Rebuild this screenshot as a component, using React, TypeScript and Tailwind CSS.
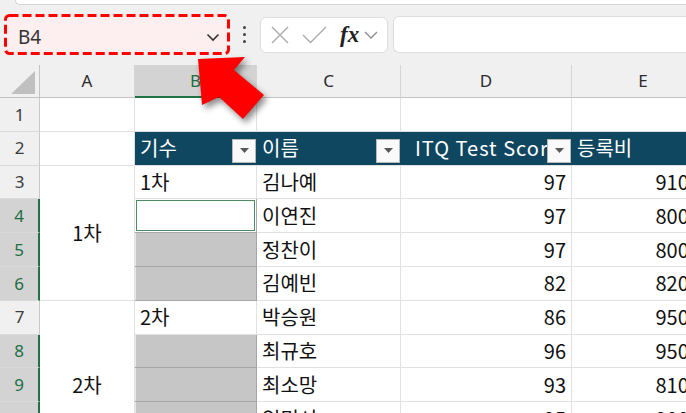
import React from "react";

const CELL_FONT = { fontFamily: '"Noto Sans CJK KR", "Noto Sans", sans-serif' };
const UI_FONT = { fontFamily: '"Noto Sans", "Open Sans", sans-serif' };

type Row = {
  n: number;
  a?: { text: string; span: string } | "none";
  b: "text" | "active" | "sel";
  bText?: string;
  c: string;
  d: string;
  e: string;
};

const ROWS: Row[] = [
  { n: 3, a: { text: "1차", span: "row-span-4" }, b: "text", bText: "1차", c: "김나예", d: "97", e: "91000" },
  { n: 4, a: "none", b: "active", c: "이연진", d: "97", e: "80000" },
  { n: 5, a: "none", b: "sel", c: "정찬이", d: "97", e: "80000" },
  { n: 6, a: "none", b: "sel", c: "김예빈", d: "82", e: "82000" },
  { n: 7, a: { text: "2차", span: "row-span-5" }, b: "text", bText: "2차", c: "박승원", d: "86", e: "95000" },
  { n: 8, a: "none", b: "sel", c: "최규호", d: "96", e: "95000" },
  { n: 9, a: "none", b: "sel", c: "최소망", d: "93", e: "81000" },
  { n: 10, a: "none", b: "sel", c: "임민서", d: "95", e: "90000" },
  { n: 11, a: "none", b: "sel", c: "", d: "", e: "" },
];

const SELECTED_ROWS = [4, 5, 6, 8, 9, 10, 11];

function RowHead({ n }: { n: number }) {
  const sel = SELECTED_ROWS.includes(n);
  return (
    <div
      style={UI_FONT}
      className={`flex items-center justify-center text-[17px] border-b border-[#d9d9d9] ${
        sel
          ? "bg-[#d3d3d3] text-[#1e6e42] border-r-2 border-r-[#217346]"
          : "bg-[#f0f0f0] text-[#3b3b3b] border-r border-r-[#c8c8c8]"
      }`}
    >
      {n}
    </div>
  );
}

function FilterBtn() {
  return (
    <div className="absolute right-px bottom-[2px] w-[24px] h-[24px] bg-[#fafafa] border border-[#b8b8b8] flex items-center justify-center">
      <svg width="9" height="5" viewBox="0 0 9 5">
        <polygon points="0,0 9,0 4.5,5" fill="#5a5a5a" />
      </svg>
    </div>
  );
}

function ColHead({ label, sel }: { label: string; sel?: boolean }) {
  return (
    <div
      style={UI_FONT}
      className={`flex items-center justify-center text-[17px] border-r border-[#d5d5d5] ${
        sel
          ? "bg-[#d3d3d3] text-[#1e6e42] border-b-2 border-b-[#217346]"
          : "bg-[#f0f0f0] text-[#2b2b2b] border-b border-b-[#c4c4c4]"
      }`}
    >
      {label}
    </div>
  );
}

const gridCell = "border-r border-b border-[#e1e1e1] bg-white";

export default function App() {
  return (
    <div className="relative w-[686px] h-[413px] overflow-hidden bg-[#f0f0f0]" style={UI_FONT}>
      {/* top strip */}
      <div className="h-[5px] ml-[15px] bg-white border-b border-l border-[#d4d4d4] rounded-bl-[7px]" />

      {/* name box + formula bar */}
      <div className="flex items-center mt-[9px] h-[41px]">
        <div className="relative ml-[4px] w-[226px] h-[41px] rounded-[5px] bg-[#fdeff0] flex items-center pl-[14px] pr-[10px] pt-[6px]">
          <span className="text-[19px] text-[#333]">B4</span>
          <svg className="ml-auto" width="14" height="9" viewBox="0 0 14 9">
            <polyline points="1.5,1.5 7,7 12.5,1.5" fill="none" stroke="#333" strokeWidth="1.6" />
          </svg>
          {/* red dashed callout outline */}
          <svg className="absolute inset-0 pointer-events-none" width="226" height="41">
            <rect
              x="1.5"
              y="1.5"
              width="223"
              height="38"
              rx="4"
              fill="none"
              stroke="#ff0000"
              strokeWidth="3"
              strokeDasharray="9 4"
            />
          </svg>
        </div>
        <div className="ml-[13px] flex flex-col gap-[4px]">
          <div className="w-[3px] h-[3px] rounded-full bg-[#444]" />
          <div className="w-[3px] h-[3px] rounded-full bg-[#444]" />
          <div className="w-[3px] h-[3px] rounded-full bg-[#444]" />
        </div>
        <div className="ml-[14px] w-[128px] h-[36px] bg-white rounded-[6px] border border-[#dedede] flex items-center">
          <svg className="ml-[9px]" width="20" height="20" viewBox="0 0 20 20">
            <line x1="2" y1="2" x2="18" y2="18" stroke="#ababab" strokeWidth="1.4" />
            <line x1="18" y1="2" x2="2" y2="18" stroke="#ababab" strokeWidth="1.4" />
          </svg>
          <svg className="ml-[12px]" width="25" height="18" viewBox="0 0 25 18">
            <polyline points="1,9 8.5,16.5 24,1" fill="none" stroke="#ababab" strokeWidth="1.4" />
          </svg>
          <span
            className="ml-[13px] text-[23px] font-bold italic text-[#222] leading-none"
            style={{ fontFamily: '"Liberation Serif", "DejaVu Serif", serif' }}
          >
            fx
          </span>
          <svg className="ml-[5px]" width="14" height="8" viewBox="0 0 14 8">
            <polyline points="1,1 7,7 13,1" fill="none" stroke="#8a8a8a" strokeWidth="1.3" />
          </svg>
        </div>
        <div className="ml-[5px] flex-1 h-[37px] bg-white rounded-l-[6px] border border-r-0 border-[#dedede]" />
      </div>

      {/* sheet grid */}
      <div className="mt-[10px] grid grid-cols-[40px_95px_122px_144px_171px_143px] grid-rows-[33px_repeat(11,33.8px)]">
        {/* column headers */}
        <div className="flex items-end justify-end pr-[4px] pb-[3px] bg-[#f0f0f0] border-r border-b border-[#c4c4c4]">
          <svg width="24" height="23" viewBox="0 0 24 23">
            <polygon points="24,0 24,23 0,23" fill="#c0c0c0" />
          </svg>
        </div>
        <ColHead label="A" />
        <ColHead label="B" sel />
        <ColHead label="C" />
        <ColHead label="D" />
        <ColHead label="E" />

        {/* row 1 */}
        <RowHead n={1} />
        <div className={gridCell} />
        <div className={gridCell} />
        <div className={gridCell} />
        <div className={gridCell} />
        <div className={gridCell} />

        {/* row 2: table header */}
        <RowHead n={2} />
        <div className={gridCell} />
        {["기수", "이름", "ITQ Test Score", "등록비"].map((h, i) => (
          <div
            key={h}
            style={CELL_FONT}
            className={`relative flex items-center overflow-hidden whitespace-nowrap bg-[#0f4761] text-white text-[20px] border-b border-[#e1e1e1] ${
              i === 2 ? "pl-[14px] tracking-[1px]" : "pl-[5px]"
            }`}
          >
            {h}
            {i < 3 && <FilterBtn />}
          </div>
        ))}

        {/* data rows */}
        {ROWS.map((r) => (
          <React.Fragment key={r.n}>
            <RowHead n={r.n} />
            {typeof r.a === "object" && (
              <div
                style={CELL_FONT}
                className={`${r.a.span} ${gridCell} flex items-center justify-center text-[20px] text-[#111]`}
              >
                {r.a.text}
              </div>
            )}
            {r.b === "text" && (
              <div style={CELL_FONT} className={`${gridCell} flex items-center pl-[5px] text-[20px] text-[#111]`}>
                {r.bText}
              </div>
            )}
            {r.b === "active" && (
              <div className="bg-white border-r border-b border-[#a9a9a9] p-px">
                <div className="h-full border border-[#4e8a64]" />
              </div>
            )}
            {r.b === "sel" && (
              <div className="bg-[#c6c6c6] border-r border-b border-[#a6a6a6] shadow-[inset_1px_0_0_#e8e8e8]" />
            )}
            <div style={CELL_FONT} className={`${gridCell} flex items-center pl-[5px] text-[20px] text-[#111]`}>
              {r.c}
            </div>
            <div style={CELL_FONT} className={`${gridCell} flex items-center justify-end pr-[5px] text-[20px] text-[#111]`}>
              {r.d}
            </div>
            <div style={CELL_FONT} className={`${gridCell} flex items-center justify-end pr-[3px] text-[20px] text-[#111]`}>
              {r.e}
            </div>
          </React.Fragment>
        ))}
      </div>

      {/* red callout arrow */}
      <svg
        className="absolute left-0 top-0 pointer-events-none"
        width="686"
        height="413"
        style={{ filter: "drop-shadow(3px 4px 3px rgba(0,0,0,0.45))" }}
      >
        <polygon points="198,59 245,57 234,70 264,95 243,119 219,97 202,105" fill="#ff0000" />
      </svg>
    </div>
  );
}
